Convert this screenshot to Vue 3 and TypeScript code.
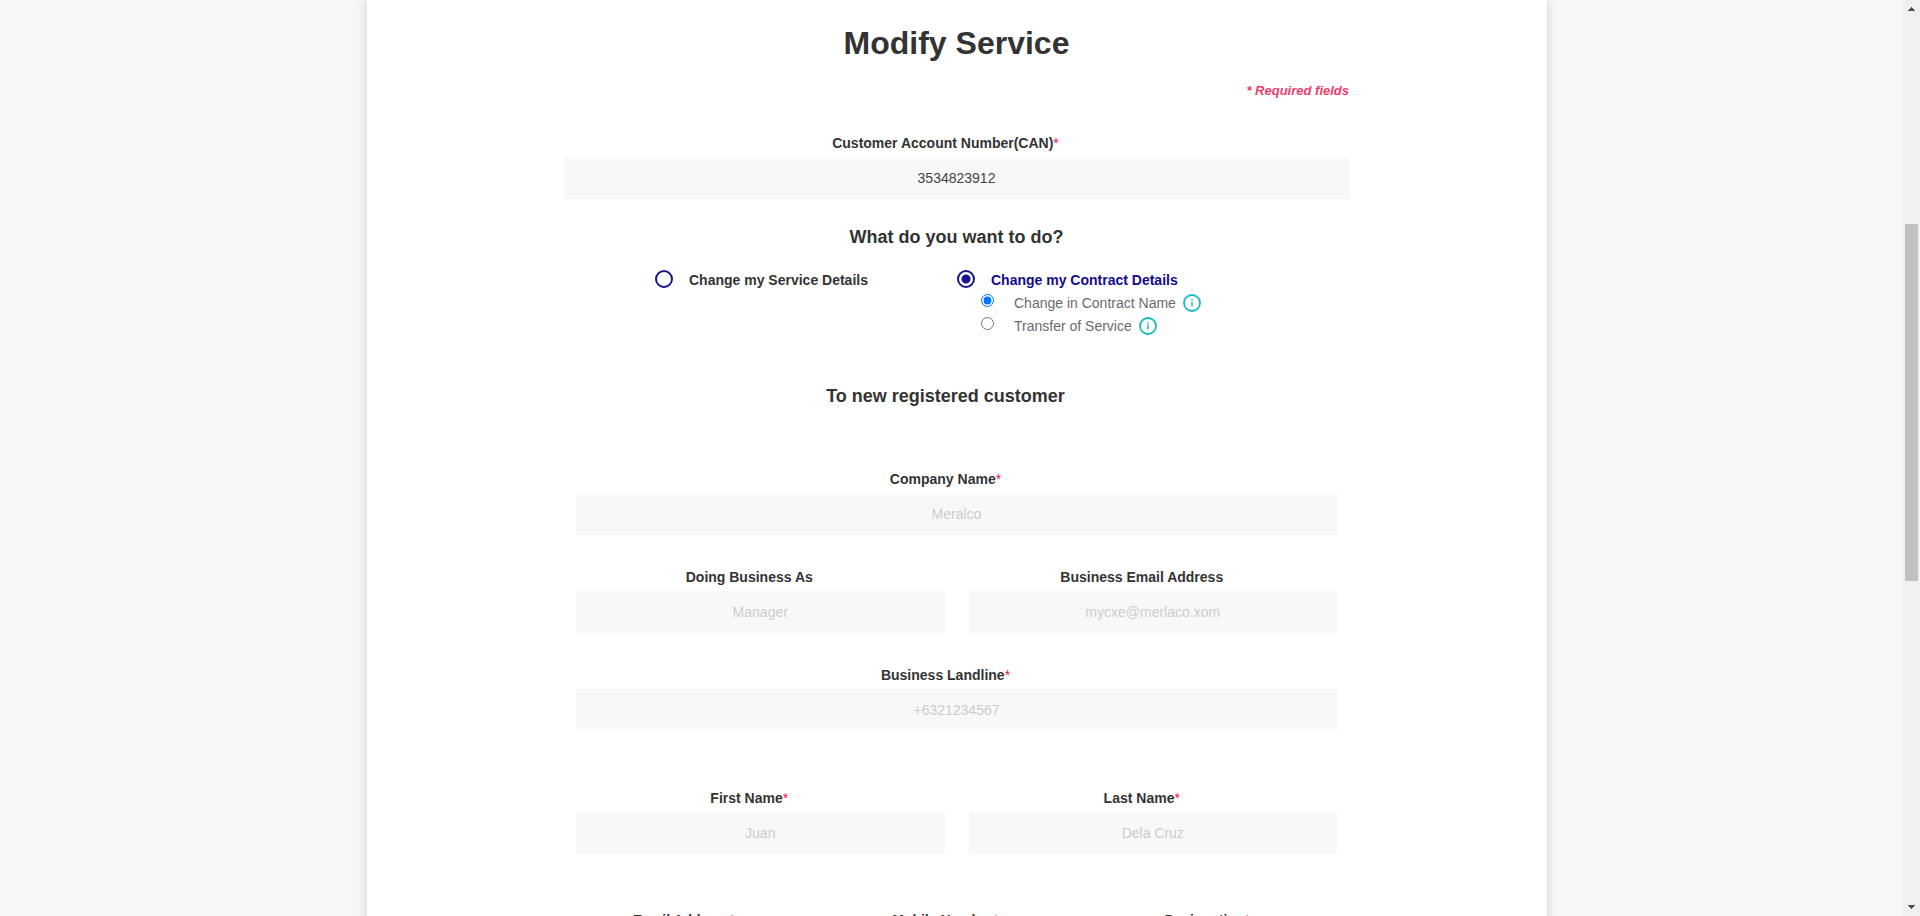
<script setup lang="ts">
import { ref } from 'vue'

interface Field {
  id: string
  label: string
  placeholder: string
  required: boolean
  type: string
}

const accountNumber = ref('3534823912')
const action = ref('contract')
const contractChange = ref('name')

const actions = [
  { value: 'service', label: 'Change my Service Details' },
  { value: 'contract', label: 'Change my Contract Details' },
]

const contractChanges = [
  { value: 'name', label: 'Change in Contract Name' },
  { value: 'transfer', label: 'Transfer of Service' },
]

const field = (id: string, label: string, placeholder: string, required = true, type = 'text'): Field => ({
  id,
  label,
  placeholder,
  required,
  type,
})

const companyRows: Field[][] = [
  [field('company', 'Company Name', 'Meralco')],
  [
    field('dba', 'Doing Business As', 'Manager', false),
    field('business-email', 'Business Email Address', 'mycxe@merlaco.xom', false, 'email'),
  ],
  [field('landline', 'Business Landline', '+6321234567', true, 'tel')],
]

const contactRows: Field[][] = [
  [field('first-name', 'First Name', 'Juan'), field('last-name', 'Last Name', 'Dela Cruz')],
  [
    field('email', 'Email Address', '', true, 'email'),
    field('mobile', 'Mobile Number', '', true, 'tel'),
    field('designation', 'Designation', ''),
  ],
]

const groups = [companyRows, contactRows]
</script>

<template>
  <div class="shell">
    <div class="page">
      <main class="card">
        <form class="form" @submit.prevent>
          <h1>Modify Service</h1>
          <p class="required-note">* Required fields</p>

          <div class="field account">
            <label for="can">Customer Account Number(CAN)<span class="star">*</span></label>
            <input id="can" v-model="accountNumber" type="text" />
          </div>

          <h2 class="question">What do you want to do?</h2>

          <div class="actions">
            <div v-for="item in actions" :key="item.value" class="action">
              <div class="action-row">
                <input :id="item.value" v-model="action" class="big-radio" type="radio" name="action" :value="item.value" />
                <label :for="item.value" :class="{ selected: action === item.value }">{{ item.label }}</label>
              </div>
              <template v-if="item.value === 'contract'">
                <div v-for="change in contractChanges" :key="change.value" class="sub-row">
                  <input :id="change.value" v-model="contractChange" type="radio" name="change" :value="change.value" />
                  <label :for="change.value">{{ change.label }}</label>
                  <button class="info" type="button" :aria-label="`About ${change.label}`">
                    <svg viewBox="0 0 18 18" width="18" height="18" aria-hidden="true">
                      <circle cx="9" cy="9" r="8" fill="none" stroke="#18bcc4" stroke-width="1.8" />
                      <path d="M8.3 5h1.4v1.4H8.3zM8.3 7.6h1.4v5H8.3z" fill="#18bcc4" />
                    </svg>
                  </button>
                </div>
              </template>
            </div>
          </div>

          <section class="customer">
            <h2>To new registered customer</h2>
            <div v-for="(rows, g) in groups" :key="g" class="group">
              <div v-for="(row, r) in rows" :key="r" class="row">
                <div v-for="f in row" :key="f.id" class="field">
                  <label :for="f.id">{{ f.label }}<span v-if="f.required" class="star">*</span></label>
                  <input :id="f.id" :type="f.type" :placeholder="f.placeholder" />
                </div>
              </div>
            </div>
          </section>
        </form>
      </main>
    </div>

    <div class="scrollbar" aria-hidden="true">
      <svg viewBox="0 0 7 4" width="7" height="4" shape-rendering="crispEdges">
        <path d="M3 0h1v1h1v1h1v1h1v1H0V3h1V2h1V1h1z" fill="#505050" />
      </svg>
      <div class="track"><div class="thumb"></div></div>
      <svg viewBox="0 0 7 4" width="7" height="4" shape-rendering="crispEdges">
        <path d="M0 0h7v1H6v1H5v1H4v1H3V3H2V2H1V1H0z" fill="#505050" />
      </svg>
    </div>
  </div>
</template>

<style>
body {
  margin: 0;
  background: #f7f7f7;
}
</style>

<style scoped>
.shell {
  display: flex;
  height: 100vh;
  overflow: hidden;
  font-family: 'Liberation Sans', Arial, sans-serif;
  font-size: 14px;
  line-height: 20px;
  color: #333;
}

.page {
  flex: 1;
  min-width: 0;
  padding-left: 10px;
  overflow: hidden;
}

.card {
  max-width: 1180px;
  min-height: 100%;
  margin: 0 auto;
  background: #fff;
  box-shadow: 0 0 10px rgba(0, 0, 0, 0.16);
}

.form {
  box-sizing: border-box;
  max-width: 785px;
  margin: 0 auto;
  padding-top: 23px;
}

h1 {
  margin: 0;
  font-size: 32px;
  line-height: 40px;
  text-align: center;
}

.required-note {
  margin: 18px 0 0;
  font-size: 13px;
  font-weight: bold;
  font-style: italic;
  text-align: right;
  color: #ee3d6b;
}

.account {
  margin-top: 32px;
}

h2 {
  margin: 0;
  font-size: 18px;
  line-height: 24px;
  text-align: center;
}

.question {
  margin-top: 26px;
}

.field {
  display: flex;
  flex: 1;
  flex-direction: column;
  gap: 4px;
  min-width: 0;
}

.field label {
  padding-right: 22px;
  font-weight: bold;
  text-align: center;
}

.star {
  font-weight: normal;
  color: #f0123f;
}

.field input {
  box-sizing: border-box;
  width: 100%;
  height: 42px;
  padding: 0 12px;
  border: 0;
  border-radius: 0;
  background: #f8f8f8;
  font: inherit;
  color: #444;
  text-align: center;
}

.field input::placeholder {
  color: #ccc;
  opacity: 1;
}

.actions {
  display: grid;
  grid-template-columns: 302px 1fr;
  min-height: 69px;
  margin-top: 19px;
  padding-left: 91px;
}

.action-row {
  display: flex;
  align-items: center;
  gap: 16px;
  height: 23px;
  font-weight: bold;
}

.big-radio {
  appearance: none;
  align-self: flex-start;
  box-sizing: border-box;
  width: 18px;
  height: 18px;
  margin: 2px 0 0;
  border: 2px solid #17148f;
  border-radius: 50%;
}

.big-radio:checked {
  background: radial-gradient(circle, #17148f 4px, #fff 5px);
}

.selected {
  color: #120c8c;
}

.sub-row {
  display: flex;
  align-items: center;
  height: 23px;
  padding-left: 24px;
  color: #6b6b6b;
}

.sub-row input {
  align-self: flex-start;
  width: 13px;
  height: 13px;
  margin: 3px 20px 0 0;
}

.info {
  display: flex;
  margin-left: 7px;
  padding: 0;
  border: 0;
  background: none;
}

.customer {
  margin-top: 47px;
  padding: 0 12px;
}

.customer h2 {
  padding-right: 22px;
}

.group {
  display: flex;
  flex-direction: column;
  gap: 32px;
  margin-top: 61px;
}

.group + .group {
  gap: 56px;
  margin-top: 57px;
}

.row {
  display: flex;
  gap: 24px;
}

.scrollbar {
  box-sizing: border-box;
  display: flex;
  flex-direction: column;
  align-items: center;
  width: 17px;
  padding: 7px 0;
  background: #f0f0f0;
}

.track {
  display: flex;
  flex: 1;
  flex-direction: column;
  align-self: stretch;
  padding: 0 2px;
}

.track::before {
  flex: 213;
  content: '';
}

.thumb {
  flex: 357;
  background: #c1c1c1;
}

.track::after {
  flex: 324;
  content: '';
}
</style>
